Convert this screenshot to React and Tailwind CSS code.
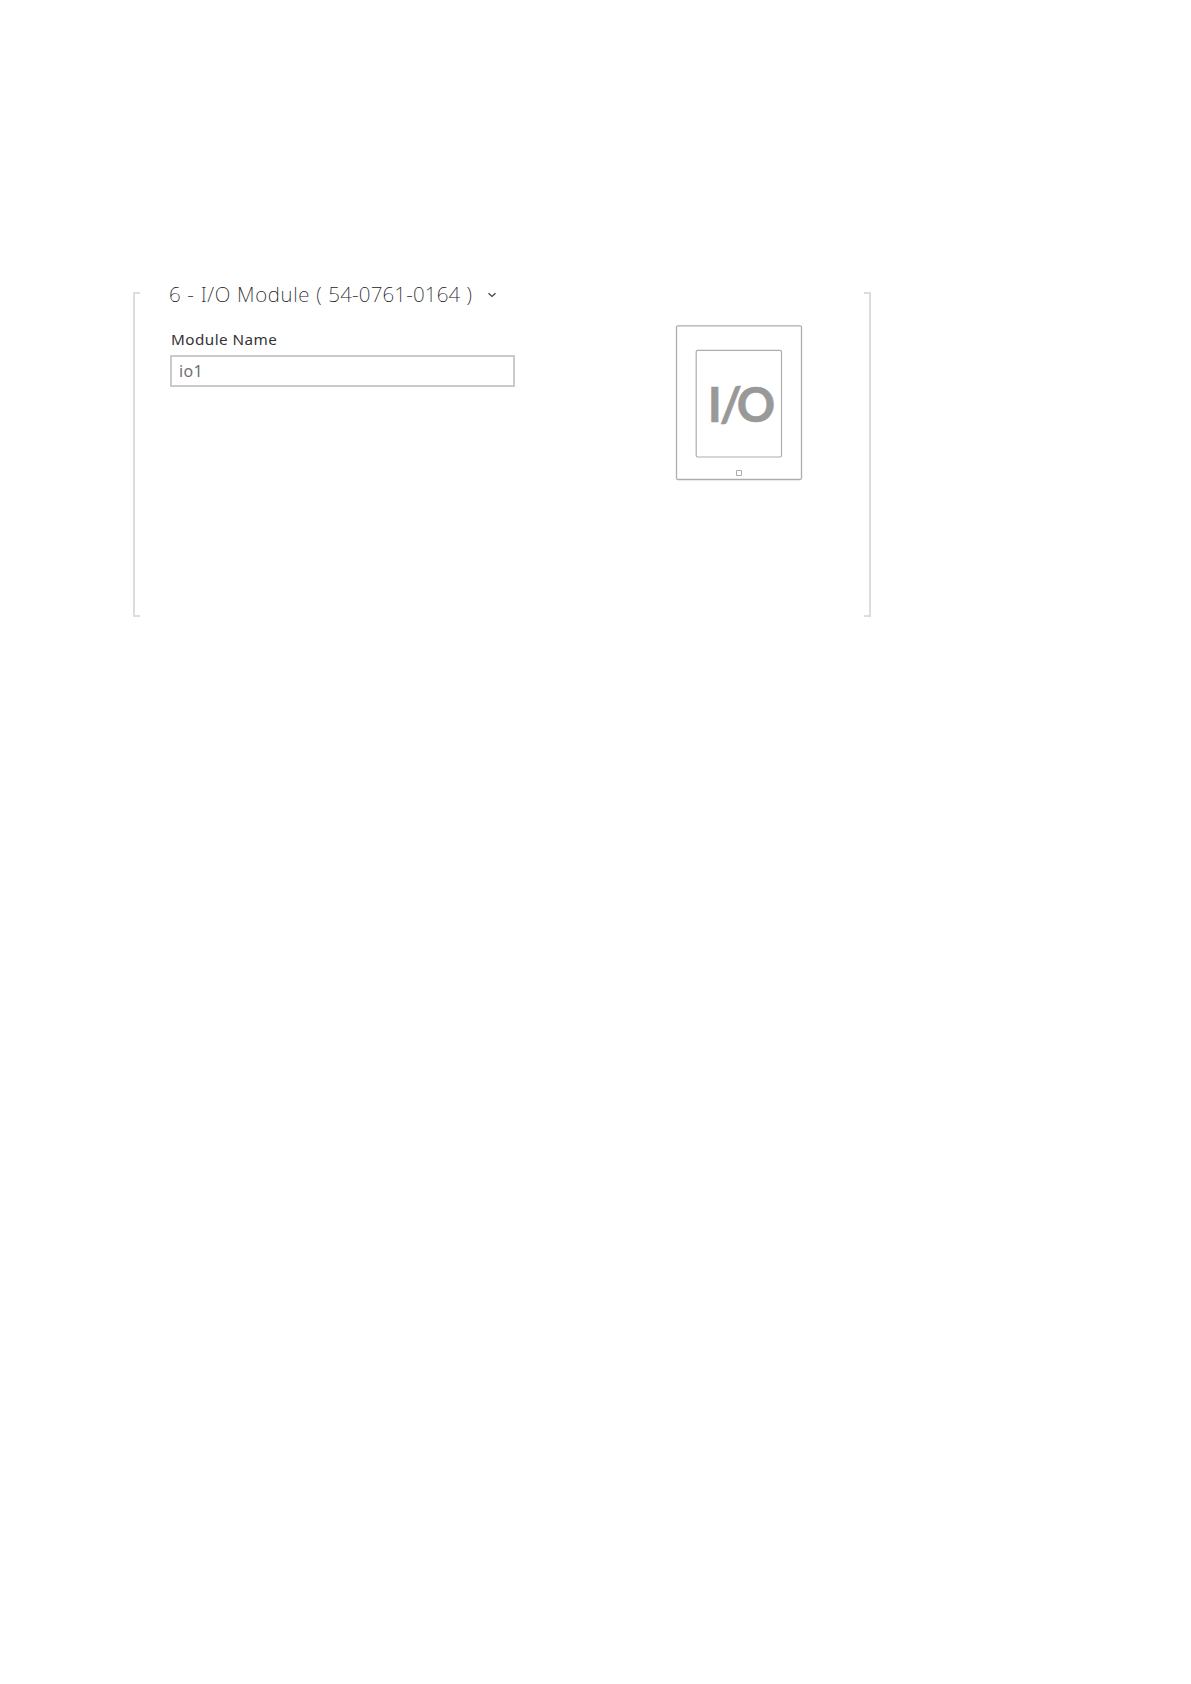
function ModuleIcon() {
  return (
    <svg width="128" height="158" viewBox="0 0 128 158" fill="none" aria-label="I/O module">
      <rect x="1.5" y="1.8" width="125" height="153.7" rx="1.5" stroke="#adadad" strokeWidth="1.3" />
      <rect x="21.2" y="26.3" width="85.3" height="106.7" rx="1.5" stroke="#adadad" strokeWidth="1.2" />
      <path d="M61.5 146.5h5v5h-5z" stroke="#adadad" />
      <text
        x="32.7 44.7 61.7"
        y="98"
        fill="#999999"
        stroke="#999999"
        strokeWidth="0.6"
        fontFamily="Lato, sans-serif"
        fontWeight="700"
        fontSize="47.5"
      >
        I/O
      </text>
    </svg>
  );
}

function Bracket({ side }) {
  return (
    <div
      className={
        side === "left"
          ? "h-[325px] w-[7px] border-y-2 border-l-2 border-[#dcdcdc]"
          : "h-[325px] w-[7px] border-y-2 border-r-2 border-[#dcdcdc]"
      }
    />
  );
}

export default function App() {
  return (
    <main className="min-h-[1684px] bg-white pt-[292px] pl-[133px] font-['Noto_Sans',sans-serif]">
      <section className="flex w-[738px] justify-between">
        <Bracket side="left" />
        <div className="-mt-3 ml-[28px] flex-1">
          <h1 className="flex h-7 items-center pl-px text-[20.5px] font-extralight leading-7 whitespace-nowrap text-[#222]">
            <span className="w-[303px] tracking-[0.68px]">
              6 - I/O Module ( <span className="tracking-[0.17px]">54-0761-0164</span> )
            </span>
            <svg className="mt-0.5 ml-[15px]" width="10" height="8" viewBox="0 0 10 8" fill="none">
              <path d="M1.5 2.2 5 5.4 8.5 2.2" stroke="#444" strokeWidth="1.3" />
            </svg>
          </h1>
          <label
            className="mt-[19px] ml-[3px] block text-[15.25px] leading-6 tracking-[0.45px] text-[#333]"
            htmlFor="name"
          >
            Module Name
          </label>
          <input
            id="name"
            defaultValue="io1"
            className="mt-1 ml-[2px] block h-8 w-[345px] border-2 border-[#cacaca] px-[7px] text-[16px] tracking-[0.3px] text-[#707070]"
          />
        </div>
        <div className="mt-[32px] mr-[61px]">
          <ModuleIcon />
        </div>
        <Bracket side="right" />
      </section>
    </main>
  );
}
